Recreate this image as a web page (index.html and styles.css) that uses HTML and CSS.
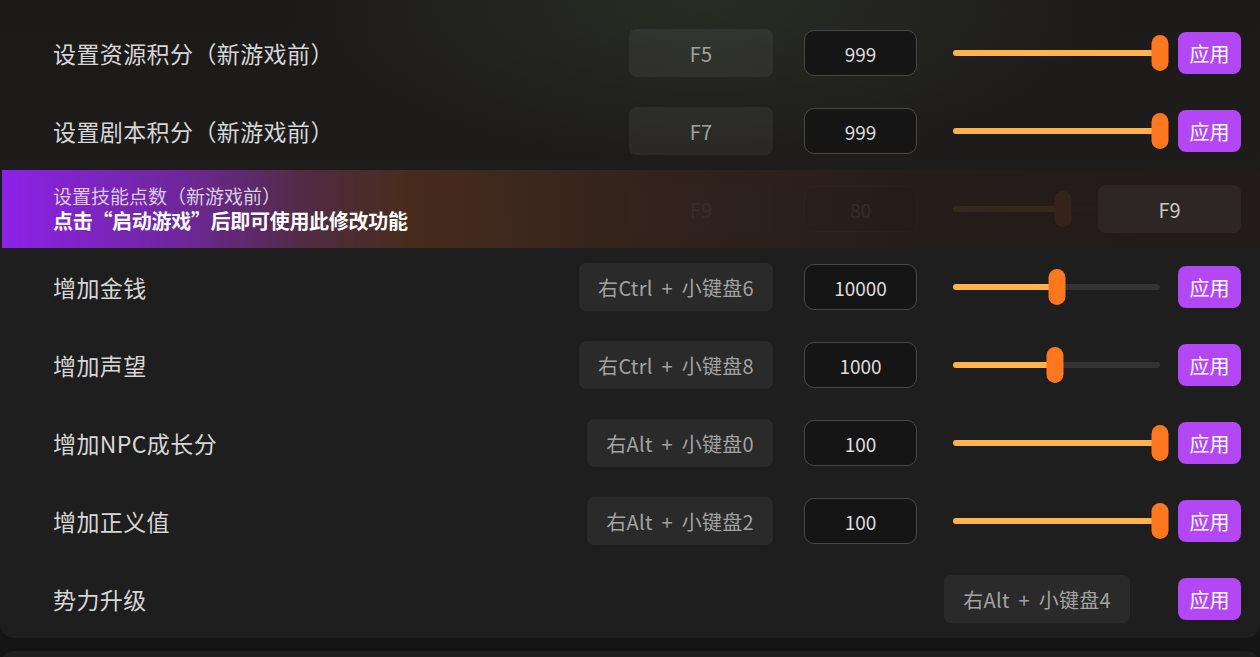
FILE: index.html
```html
<!DOCTYPE html>
<html lang="zh-CN">
<head>
  <meta charset="UTF-8" />
  <title>修改器</title>
  <link rel="stylesheet" href="styles.css">
</head>
<body>

  <div class="panel">
    <div class="row">
      <div class="label">设置资源积分（新游戏前）</div>
      <div class="hotkey">F5</div>
      <div class="value">999</div>
      <div class="slider"><div class="fill" style="width:100%"></div><div class="thumb" style="left:100%"></div></div>
      <button class="apply">应用</button>
    </div>

    <div class="row">
      <div class="label">设置剧本积分（新游戏前）</div>
      <div class="hotkey">F7</div>
      <div class="value">999</div>
      <div class="slider"><div class="fill" style="width:100%"></div><div class="thumb" style="left:100%"></div></div>
      <button class="apply">应用</button>
    </div>

    <div class="row locked">
      <div class="label"></div>
      <div class="hotkey">F9</div>
      <div class="value">80</div>
      <div class="slider"><div class="fill" style="width:53%"></div><div class="thumb" style="left:53%"></div></div>
      <button class="apply">应用</button>
      <div class="lock-overlay">
        <div class="lock-text">
          <div class="lock-title">设置技能点数（新游戏前）</div>
          <div class="lock-tip">点击“启动游戏”后即可使用此修改功能</div>
        </div>
        <div class="lock-key">F9</div>
      </div>
    </div>

    <div class="row">
      <div class="label">增加金钱</div>
      <div class="hotkey">右Ctrl + 小键盘6</div>
      <div class="value">10000</div>
      <div class="slider"><div class="fill" style="width:50%"></div><div class="thumb" style="left:50%"></div></div>
      <button class="apply">应用</button>
    </div>

    <div class="row">
      <div class="label">增加声望</div>
      <div class="hotkey">右Ctrl + 小键盘8</div>
      <div class="value">1000</div>
      <div class="slider"><div class="fill" style="width:49.5%"></div><div class="thumb" style="left:49.5%"></div></div>
      <button class="apply">应用</button>
    </div>

    <div class="row">
      <div class="label">增加NPC成长分</div>
      <div class="hotkey">右Alt + 小键盘0</div>
      <div class="value">100</div>
      <div class="slider"><div class="fill" style="width:100%"></div><div class="thumb" style="left:100%"></div></div>
      <button class="apply">应用</button>
    </div>

    <div class="row">
      <div class="label">增加正义值</div>
      <div class="hotkey">右Alt + 小键盘2</div>
      <div class="value">100</div>
      <div class="slider"><div class="fill" style="width:100%"></div><div class="thumb" style="left:100%"></div></div>
      <button class="apply">应用</button>
    </div>

    <div class="row">
      <div class="label">势力升级</div>
      <div class="hotkey solo">右Alt + 小键盘4</div>
      <button class="apply">应用</button>
    </div>
  </div>

  <div class="panel next"></div>

</body>
</html>
```

FILE: styles.css
```css
body {
  margin: 0;
  background: #141414;
  font-family: "Noto Sans CJK SC", "Noto Sans", sans-serif;
  color: #d8d8d8;
  overflow: hidden;
}

.panel {
  background:
    radial-gradient(ellipse 420px 160px at 56% 0%, rgba(44, 48, 40, 0.85), rgba(44, 48, 40, 0) 100%),
    linear-gradient(180deg, #1c1a18 0px, #1d1c1b 140px, #1e1e1e 260px);
  border-radius: 0 0 14px 14px;
  padding: 14px 19px 0 0;
}

.panel.next {
  background: #1e1e1e;
  border-radius: 14px 14px 0 0;
  margin-top: 13px;
  height: 40px;
  padding: 0;
}

.row {
  position: relative;
  display: flex;
  align-items: center;
  height: 78px;
  padding-left: 53px;
}

.label {
  flex: 1;
  font-size: 23px;
  color: #d6d6d6;
  letter-spacing: 0.4px;
}

.hotkey {
  min-width: 144px;
  height: 48px;
  box-sizing: border-box;
  padding: 0 19px;
  display: flex;
  align-items: center;
  justify-content: center;
  background: rgba(255, 255, 255, 0.055);
  border-radius: 7px;
  font-size: 20px;
  letter-spacing: 0.3px;
  word-spacing: 4px;
  white-space: pre;
  color: #a2a2a2;
}

.hotkey.solo {
  margin-right: 30px;
}

.value {
  margin-left: 31px;
  width: 113px;
  height: 46px;
  box-sizing: border-box;
  border: 1px solid #474745;
  border-radius: 10px;
  background: #151515;
  display: flex;
  align-items: center;
  justify-content: center;
  font-size: 19px;
  color: #dcdcdc;
}

.slider {
  position: relative;
  margin-left: 36px;
  width: 207px;
  height: 6px;
  border-radius: 3px;
  background: #333333;
}

.fill {
  height: 100%;
  border-radius: 3px;
  background: #ffb34a;
}

.thumb {
  position: absolute;
  top: 50%;
  width: 17px;
  height: 36px;
  border-radius: 9px;
  background: #ff7820;
  transform: translate(-50%, -50%);
}

.apply {
  margin-left: 18px;
  width: 63px;
  height: 42px;
  border: none;
  border-radius: 8px;
  background: #b347f6;
  color: #ffffff;
  font-family: inherit;
  font-size: 20px;
  padding: 0;
  cursor: pointer;
}

.locked .lock-overlay {
  position: absolute;
  left: 2px;
  right: -19px;
  top: 0;
  bottom: 0;
  display: flex;
  align-items: center;
  padding: 0 19px 0 51px;
  background: linear-gradient(90deg,
    rgba(140, 34, 232, 1) 0%,
    rgba(112, 40, 160, 0.97) 14%,
    rgba(84, 44, 70, 0.95) 24%,
    rgba(74, 45, 30, 0.94) 32%,
    rgba(52, 36, 28, 0.93) 50%,
    rgba(36, 28, 25, 0.92) 75%,
    rgba(34, 27, 25, 0.92) 100%);
}

.lock-text {
  flex: 1;
}

.lock-title {
  font-size: 19px;
  color: #dccbe6;
  line-height: 24px;
}

.lock-tip {
  font-size: 20px;
  font-weight: bold;
  color: #ffffff;
  line-height: 26px;
  letter-spacing: -0.3px;
}

.lock-key {
  width: 143px;
  height: 48px;
  display: flex;
  align-items: center;
  justify-content: center;
  background: #2c2624;
  border-radius: 8px;
  font-size: 20px;
  color: #c8c8c8;
}
```
